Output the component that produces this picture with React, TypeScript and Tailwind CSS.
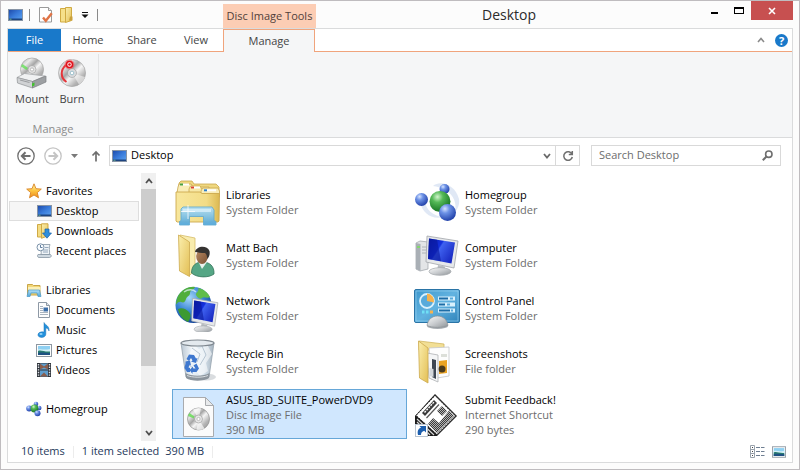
import { useState, type ReactNode } from "react";

type IconProps = { className?: string };

function Gradients() {
  return (
    <svg className="absolute h-0 w-0" aria-hidden="true">
      <defs>
        <linearGradient id="screen" x1="0" y1="0" x2="1" y2="1">
          <stop offset="0" stopColor="#1c48a8" />
          <stop offset="0.5" stopColor="#3a7cdb" />
          <stop offset="1" stopColor="#5fa4ee" />
        </linearGradient>
        <linearGradient id="deepScreen" x1="0" y1="0" x2="1" y2="0.6">
          <stop offset="0" stopColor="#0a1aa8" />
          <stop offset="0.45" stopColor="#1430dd" />
          <stop offset="0.5" stopColor="#3f62f0" />
          <stop offset="1" stopColor="#1a2cc4" />
        </linearGradient>
        <linearGradient id="folder" x1="0" y1="0" x2="1" y2="1">
          <stop offset="0" stopColor="#fbefae" />
          <stop offset="1" stopColor="#e3bf55" />
        </linearGradient>
        <linearGradient id="folderFront" x1="0" y1="0" x2="1" y2="0">
          <stop offset="0" stopColor="#f8e79d" />
          <stop offset="0.7" stopColor="#f3dc86" />
          <stop offset="1" stopColor="#dcb952" />
        </linearGradient>
        <linearGradient id="stand" x1="0" y1="0" x2="0" y2="1">
          <stop offset="0" stopColor="#b6e2f8" />
          <stop offset="1" stopColor="#4fa5d8" />
        </linearGradient>
        <linearGradient id="metal" x1="0" y1="0" x2="1" y2="1">
          <stop offset="0" stopColor="#fafafa" />
          <stop offset="0.5" stopColor="#c9cccf" />
          <stop offset="1" stopColor="#8f9498" />
        </linearGradient>
        <linearGradient id="disc" x1="0" y1="0" x2="1" y2="1">
          <stop offset="0" stopColor="#a9a9a9" />
          <stop offset="0.25" stopColor="#e9e9e9" />
          <stop offset="0.42" stopColor="#a6a6a6" />
          <stop offset="0.55" stopColor="#f6f6f6" />
          <stop offset="0.75" stopColor="#b5b5b5" />
          <stop offset="1" stopColor="#8c8c8c" />
        </linearGradient>
        <radialGradient id="blueBall" cx="0.35" cy="0.28" r="0.75">
          <stop offset="0" stopColor="#d5e3ff" />
          <stop offset="0.35" stopColor="#6d92e6" />
          <stop offset="1" stopColor="#1f3fa8" />
        </radialGradient>
        <radialGradient id="greenBall" cx="0.38" cy="0.28" r="0.75">
          <stop offset="0" stopColor="#d2f5cd" />
          <stop offset="0.35" stopColor="#55b957" />
          <stop offset="1" stopColor="#12701f" />
        </radialGradient>
        <radialGradient id="globe" cx="0.38" cy="0.3" r="0.75">
          <stop offset="0" stopColor="#a6d8fa" />
          <stop offset="0.5" stopColor="#3a86d4" />
          <stop offset="1" stopColor="#123f94" />
        </radialGradient>
        <linearGradient id="panel" x1="0" y1="0" x2="1" y2="1">
          <stop offset="0" stopColor="#3d97cd" />
          <stop offset="0.5" stopColor="#62b3e0" />
          <stop offset="1" stopColor="#2f83bb" />
        </linearGradient>
        <linearGradient id="glass" x1="0" y1="0" x2="1" y2="0">
          <stop offset="0" stopColor="#b9c6d2" />
          <stop offset="0.3" stopColor="#edf3f8" />
          <stop offset="0.7" stopColor="#d5e2ec" />
          <stop offset="1" stopColor="#a5b3bf" />
        </linearGradient>
        <linearGradient id="star" x1="0" y1="0" x2="0" y2="1">
          <stop offset="0" stopColor="#fff6b0" />
          <stop offset="0.5" stopColor="#fdc43f" />
          <stop offset="1" stopColor="#ee8a1d" />
        </linearGradient>
        <linearGradient id="skin" x1="0" y1="0" x2="1" y2="1">
          <stop offset="0" stopColor="#b98a63" />
          <stop offset="1" stopColor="#7a5234" />
        </linearGradient>
      </defs>
    </svg>
  );
}

/* ---------- small icons ---------- */

const DesktopIcon = ({ className = "h-3 w-[15px]" }: IconProps) => (
  <svg viewBox="0 0 15 12" className={className} aria-hidden="true">
    <rect x="0.5" y="0.5" width="14" height="11" fill="url(#screen)" stroke="#8794a5" />
    <path d="M1 9.500h13v1.500H1z" fill="#1d4480" />
    <path d="M1.500 10.200h2" stroke="#7fd08a" strokeWidth="0.8" />
  </svg>
);

const PropertiesIcon = () => (
  <svg viewBox="0 0 14 16" className="h-4 w-3.5" aria-hidden="true">
    <path d="M.5.5h9l3 3v11.5H.5z" fill="#fff" stroke="#9a9a9a" />
    <path d="M9.500 .5v3h3" fill="#eee" stroke="#9a9a9a" />
    <path d="M4 10.500l2.800 3.300 6-7.500" fill="none" stroke="#e07446" strokeWidth="2.400" />
  </svg>
);

const NewFolderIcon = () => (
  <svg viewBox="0 0 13 16" className="h-4 w-[13px]" aria-hidden="true">
    <path d="M.5 1.500h4.500l1 1v12.500H.5z" fill="#f6e08a" stroke="#d0aa42" />
    <path d="M5.500.5h6v13l-6 2z" fill="url(#folder)" stroke="#d0aa42" />
    <path d="M10 9.500h2.500v4H9z" fill="#c9a03b" />
  </svg>
);

const StarIcon = () => (
  <svg viewBox="0 0 16 16" className="h-4 w-4" aria-hidden="true">
    <path
      d="M8 .8l2 4.900 5.300.4-4 3.500 1.200 5.200L8 12l-4.500 2.800 1.200-5.200-4-3.500L6 5.700z"
      fill="url(#star)"
      stroke="#d98324"
      strokeWidth="0.9"
    />
  </svg>
);

const DownloadsIcon = () => (
  <svg viewBox="0 0 16 16" className="h-4 w-4" aria-hidden="true">
    <path d="M1.500 1.500h4v12.500h-4z" fill="#f4dc83" stroke="#cfa945" />
    <path d="M5.500.8h6.500v12l-6.500 2.500z" fill="url(#folder)" stroke="#cfa945" />
    <path d="M9 6h4v4h2.500L11 15.200 6.500 10H9z" fill="#2f8fdd" stroke="#1b62a8" strokeWidth="0.7" />
  </svg>
);

const RecentIcon = () => (
  <svg viewBox="0 0 16 16" className="h-4 w-4" aria-hidden="true">
    <path d="M4 1.500h10c-1.500 3 0 7-.5 10H5c1-3-1-6-1-10z" fill="#eef3f7" stroke="#8795a3" strokeWidth="0.8" />
    <path d="M2 11.500h12.500c1.500 1 .5 3-1 3H3c-1.500 0-2-2-1-3z" fill="#cfd9e1" stroke="#8795a3" strokeWidth="0.8" />
    <path d="M7 7h5M7 9h5M9 4.500h3.500" stroke="#7d94ad" strokeWidth="0.8" />
    <circle cx="4.500" cy="4.300" r="3.500" fill="#f9fcff" stroke="#7b92a8" />
    <path d="M4.500 2v2.500h2" fill="none" stroke="#3c5d85" strokeWidth="0.8" />
  </svg>
);

const LibrariesSmallIcon = () => (
  <svg viewBox="0 0 16 16" className="h-4 w-4" aria-hidden="true">
    <path d="M1.500 2.500h5l1 1h6.500V13h-12.500z" fill="#f2d778" stroke="#c9a548" />
    <path d="M2 5h12.500v3H2z" fill="#fbf0b8" />
    <path d="M2.500 8h11l1.500 6.500h-3L11 11H5l-1 3.500H1z" fill="url(#stand)" stroke="#4c9ac9" strokeWidth="0.7" />
  </svg>
);

const DocumentsIcon = () => (
  <svg viewBox="0 0 16 16" className="h-4 w-4" aria-hidden="true">
    <path d="M2.500.5h8l3 3v12h-11z" fill="#fdfdfd" stroke="#8e99a5" />
    <path d="M10.500.5v3h3" fill="#dde4ea" stroke="#8e99a5" />
    <path d="M4 4.500h3M4 6.500h3M4 8.500h3M4 10.500h8M4 12.500h8" stroke="#a9b4bf" />
    <path d="M7.500 5.500h4.500v4H7.500z" fill="#3c6ea8" />
  </svg>
);

const MusicIcon = () => (
  <svg viewBox="0 0 16 16" className="h-4 w-4" aria-hidden="true">
    <path
      d="M8 .5c1 2.500 5.800 3.500 5 8.500-.4-2-1.800-2.800-3.200-3v6.200c0 2-2 3.300-4.500 3.200C3 15.300 1.800 14 2 12.500c.3-2 3-3.200 6-2.400z"
      fill="#2391dc"
      stroke="#1a70b5"
      strokeWidth="0.5"
    />
    <ellipse cx="5" cy="12" rx="1.600" ry="1" fill="#8fd0f7" />
  </svg>
);

const PicturesIcon = ({ className = "h-[13px] w-4" }: IconProps) => (
  <svg viewBox="0 0 16 13" className={className} aria-hidden="true">
    <rect x="0.5" y="0.5" width="15" height="12" fill="#fcfcfc" stroke="#8d97a1" />
    <path d="M2 2h12v9H2z" fill="#8fd0f2" />
    <path d="M2 5.500c3-1 5 1 12-.5V8H2z" fill="#d2f0f5" />
    <path d="M2 7c3-1.500 6 1 12 .5V11H2z" fill="#287a70" />
    <path d="M2 9c4-1 7 0 12 0v2H2z" fill="#1e5182" />
  </svg>
);

const VideosIcon = () => (
  <svg viewBox="0 0 16 16" className="h-4 w-4" aria-hidden="true">
    <path d="M1 1h14v14H1z" fill="#30353c" />
    <path d="M4 1.500h8v6H4zM4 8.500h8v6H4z" fill="#5f9dcc" />
    <path d="M4 1.500l4 3 4-3v6L8 5.500 4 7.500zM4 14.500l4-4 4 4z" fill="#8a5d4b" />
    <path d="M2.500 2v12.500M13.500 2v12.500" stroke="#dfe3e8" strokeWidth="1.400" strokeDasharray="1.400 1.200" />
  </svg>
);

const HomegroupSmallIcon = () => (
  <svg viewBox="0 0 16 16" className="h-4 w-4" aria-hidden="true">
    <circle cx="10" cy="3" r="2.300" fill="url(#blueBall)" />
    <circle cx="3.200" cy="7.500" r="3" fill="url(#blueBall)" />
    <circle cx="13.200" cy="7" r="2.300" fill="url(#blueBall)" />
    <circle cx="8.500" cy="7.500" r="3.900" fill="url(#greenBall)" />
    <circle cx="11.500" cy="12.300" r="3" fill="url(#blueBall)" />
  </svg>
);

/* ---------- ribbon icons ---------- */

const MountIcon = () => (
  <svg viewBox="0 0 32 32" className="h-8 w-8" aria-hidden="true">
    <circle cx="16" cy="12.500" r="11.500" fill="url(#disc)" stroke="#a3a3a3" strokeWidth="0.7" />
    <path d="M5 9.500a11.500 11.500 0 0 1 1.500-2.500l5.500 4-1.500 2z" fill="#5de04f" opacity="0.75" />
    <circle cx="16" cy="12.500" r="4" fill="#e2e2e2" stroke="#9b9b9b" strokeWidth="0.6" />
    <circle cx="16" cy="12.500" r="1.600" fill="#fff" stroke="#9b9b9b" strokeWidth="0.6" />
    <path d="M8.500 16.500L29 19l-12.500 5.500L1 20.500z" fill="#f0f1f2" stroke="#9ea1a4" strokeWidth="0.7" />
    <path d="M1 20.500l15.500 4V31L1.500 26z" fill="#d0d2d4" stroke="#8f9295" strokeWidth="0.7" />
    <path d="M16.500 24.500L30 19v6L16.500 31z" fill="#9da0a3" stroke="#7d8083" strokeWidth="0.7" />
    <path d="M4 23l9.500 2.500" stroke="#8b8e91" strokeWidth="0.8" />
    <path d="M16 26.500l2.500-1v3l-2.500 1z" fill="#42c22e" />
  </svg>
);

const BurnIcon = () => (
  <svg viewBox="0 0 32 32" className="h-8 w-8" aria-hidden="true">
    <circle cx="16" cy="16" r="13.500" fill="url(#disc)" stroke="#a3a3a3" strokeWidth="0.7" />
    <path d="M16 16L8 5a13.500 13.500 0 0 1 9-2.500zM16 16l13 4a13.500 13.500 0 0 1-6 7.500z" fill="#fff" opacity="0.5" />
    <circle cx="16" cy="16" r="4.500" fill="#d8dadc" stroke="#9b9b9b" strokeWidth="0.6" />
    <circle cx="16" cy="16" r="1.800" fill="#fff" stroke="#8db9c6" strokeWidth="0.8" />
    <path d="M10 8C4 13 4.500 21 10.500 25" fill="none" stroke="#e5363b" strokeWidth="2" />
    <circle cx="13.500" cy="7.500" r="5" fill="#ee4a50" opacity="0.55" />
    <circle cx="13.500" cy="7.500" r="3" fill="#fff" stroke="#e0121b" strokeWidth="1.600" />
    <circle cx="13.500" cy="7.500" r="1.300" fill="#e0121b" />
  </svg>
);

/* ---------- file icons ---------- */

const Large = ({ children }: { children: ReactNode }) => (
  <svg viewBox="0 0 48 48" className="h-12 w-12 shrink-0" aria-hidden="true">
    {children}
  </svg>
);

const LibrariesIcon = () => (
  <Large>
    <path d="M5 11V5l2-2h11l2 3h22l3 3v8H5z" fill="#efd77f" stroke="#c9a64b" strokeWidth="0.8" />
    <path d="M4 9l1-3h12l2 3h16v6H3z" fill="#f9edb7" stroke="#c9a64b" strokeWidth="0.8" />
    <path d="M15 11l1.500-3H26l2 3h13v6H15z" fill="#f7e8a6" stroke="#c9a64b" strokeWidth="0.8" />
    <path d="M27 13l1.500-3H44l1.500 3v6H27z" fill="#f9edb7" stroke="#c9a64b" strokeWidth="0.8" />
    <path d="M6 5.500h9v2H6z" fill="#fff" />
    <path d="M6 5.500h3v2H6z" fill="#4aa23f" />
    <path d="M17 8.500h9v2h-9z" fill="#fff" />
    <path d="M17 8.500h3v2h-3z" fill="#d9442f" />
    <path d="M30 11.300h12v2H30z" fill="#fff" />
    <path d="M30 11.300h3v2h-3z" fill="#2e7fc6" />
    <path d="M2 14h24l2 1.500h17.500L45 43l-1 1H3l-1-1z" fill="url(#folderFront)" stroke="#cda94e" strokeWidth="0.9" />
    <path
      d="M9 29h29l2 3v10.500l2 1v3.500H29.500v-8.500h-14V47H5.500v-3.500l1.500-1V31z"
      fill="url(#stand)"
      stroke="#5fa9d3"
      strokeWidth="0.9"
      opacity="0.94"
    />
    <path d="M9 31h28v3H8z" fill="#e1f4fd" opacity="0.7" />
    <path d="M14 27v14M7 33.500h14" stroke="#fff" strokeWidth="1" opacity="0.75" />
  </Large>
);

const UserIcon = () => (
  <Large>
    <path d="M6 4l15 3v32l-6 6z" fill="#f8ecae" stroke="#d7bd67" strokeWidth="0.8" />
    <path d="M4.500 4l11 7v34.500l-10-5.500z" fill="url(#folder)" stroke="#cda94e" strokeWidth="0.8" />
    <path d="M17.500 42c0-8 5-11 11-11 7 0 12 4 11.500 12-5 4-17 4-22.500-1z" fill="#55a685" stroke="#34745a" strokeWidth="0.8" />
    <path d="M24.500 31l3.500 7 5-7z" fill="#e9f3ee" />
    <ellipse cx="28" cy="25.500" rx="5.800" ry="7.500" fill="url(#skin)" />
    <path d="M21 21c1-6 12-7.500 14.500-1 .8 4-1 7-2.500 8 .5-3-1-5.500-2-6-4 0-7-.5-10-1z" fill="#353331" />
  </Large>
);

const Monitor = () => (
  <>
    <path d="M14 5l31 5-4 27-28-6z" fill="#e6e8ea" stroke="#a2a6ab" strokeWidth="0.8" />
    <path d="M16 7.500l26 4-3.500 21L15 28z" fill="url(#deepScreen)" />
    <path d="M16 7.500l8 1.200 4 21.500L15 28z" fill="#091899" opacity="0.6" />
    <path d="M25 34l7 1.500V40h-8z" fill="#b9bdc1" />
    <ellipse cx="27" cy="40.500" rx="11" ry="3.800" fill="url(#metal)" stroke="#a2a6ab" strokeWidth="0.7" />
  </>
);

const NetworkIcon = () => (
  <Large>
    <circle cx="19.500" cy="21" r="18" fill="url(#globe)" />
    <path d="M4 12c4-7 12-10 17-9-1 3-5 3-5 6s-3 3-4 6-2 4-5 3-5 3-5 3c0-3 .5-6 2-9z" fill="#50ae3c" />
    <path d="M24 4c6 1 10 5 12 9-3 2-6-1-8 1s-5-1-6-3 4-4 2-7z" fill="#5fbd4a" />
    <path d="M4 25c4-2 8 0 11 3s1 7-1 10c-6-3-9-8-10-13z" fill="#3c9a31" />
    <path d="M10 8c4-3 9-3 12 0" stroke="#e6f6ff" strokeWidth="1.500" fill="none" opacity="0.7" />
    <g transform="translate(7 10) scale(.82 .87)">
      <Monitor />
    </g>
  </Large>
);

const ComputerIcon = () => (
  <Large>
    <path d="M3 12l4-2 8 1v27l-8 2-4-2z" fill="#e3e5e7" stroke="#a4a9ae" strokeWidth="0.8" />
    <path d="M3 12l4.500 1V40L3 38z" fill="#a9afb5" />
    <path d="M4 16h3" stroke="#7ce060" strokeWidth="1.600" />
    <path d="M9 16h5M9 19h5M9 22h5" stroke="#a3a8ad" strokeWidth="0.8" />
    <Monitor />
  </Large>
);

const HomegroupIcon = () => (
  <Large>
    <path d="M7 24c2 11 12 18 23 15-10-1-17-7-18-16z" fill="#d8e2f2" opacity="0.8" />
    <path d="M20 8c7-6 22-2 26 13 1 6-2 11-4 13 3-12-5-24-22-26z" fill="#d8e2f2" opacity="0.8" />
    <circle cx="31.500" cy="11" r="5" fill="url(#blueBall)" />
    <circle cx="8.500" cy="21.500" r="6.500" fill="url(#blueBall)" />
    <circle cx="27" cy="23.500" r="10.500" fill="url(#greenBall)" />
    <circle cx="34.500" cy="34.500" r="8.500" fill="url(#blueBall)" />
  </Large>
);

const ControlPanelIcon = () => (
  <Large>
    <rect x="1.500" y="5.500" width="45" height="33" rx="1.500" fill="url(#panel)" stroke="#2a74a6" />
    <rect x="3" y="7" width="42" height="30" fill="none" stroke="#a5d8f3" strokeWidth="0.8" opacity="0.7" />
    <circle cx="14" cy="17" r="7" fill="#58aadb" stroke="#d9f1fd" strokeWidth="1.800" />
    <path d="M14 17V9.500a7.500 7.500 0 0 1 7 9z" fill="#f6b24d" />
    <path d="M25 12.500h17v4H25zM25 18.500h17v4H25zM25 24.500h17v4H25z" fill="#d9f1fd" />
    <path d="M26 14.500h9M26 20.500h6M26 26.500h11" stroke="#1c6da7" strokeWidth="2" />
    <path d="M37 14.500h3M34 20.500h3M38 26.500h2" stroke="#58aadb" strokeWidth="2" />
    <path d="M9 26.500h2.500v3H9zM13 26.500h2.500v3H13z" fill="#6fe0f5" />
    <path d="M17 26.500h3v3h-3z" fill="#f6b24d" />
    <ellipse cx="24.500" cy="42" rx="10.500" ry="3" fill="#a8adb2" />
    <path d="M14 41.500c1-6 5-9.500 10.500-9.500S34 35.500 35 41.500c-5 2.500-16 2.500-21 0z" fill="url(#metal)" stroke="#8b9095" strokeWidth="0.7" />
  </Large>
);

const RecycleBinIcon = () => (
  <Large>
    <ellipse cx="32" cy="40" rx="10" ry="3.500" fill="#c9cdd1" opacity="0.7" />
    <path d="M7 6h33l-5 34c-5 3.500-18 3.500-23 0z" fill="url(#glass)" stroke="#97a3ae" strokeWidth="0.8" />
    <path d="M10 8l8 3-3 7 8 5-4 8 7 8 8-5-2-8 6-9-5-10-8 5-6-5z" fill="#fff" opacity="0.55" />
    <path d="M18 11l8 6-3 8M28 9l4 9-6 10M15 28l8 6" fill="none" stroke="#a9bac9" strokeWidth="1" opacity="0.8" />
    <path d="M11.500 36c6 3.500 18 3.500 24 0l-.5 5c-5 3.500-18 3.500-23 0z" fill="#8b949c" />
    <path d="M13 38.500c5 2 15 2.500 21 0" fill="none" stroke="#d7dce0" />
    <ellipse cx="23.500" cy="6" rx="16.500" ry="3" fill="#e3e9ee" stroke="#7f8890" strokeWidth="1.200" />
    <g fill="#3f78cf">
      <path d="M12.500 22l2.500-4.500 5 .5 2 3.500 1.500-.5-1.500 5-5-1.500 1.500-1-1.500-2.500-2 3z" />
      <path d="M22.500 26.500l2.500 5-2.500 3.500h-4v2l-3-4 3.500-3.500v2h2.500l-2-3z" />
      <path d="M11.500 24.500l4.500-1 1 5-1.500-.7-1 2.700 1.500.5V35h-3L10.500 31l1-4.500z" />
    </g>
  </Large>
);

const ScreenshotsIcon = () => (
  <Large>
    <path d="M6 4l25 3v6H6z" fill="#f2df95" stroke="#d2b65f" strokeWidth="0.8" />
    <path d="M16 11l20-1v29l-18 3z" fill="#fdfdfd" stroke="#c4c7ca" strokeWidth="0.8" />
    <path d="M26 24l8-1v13l-8 1z" fill="#e9a324" />
    <circle cx="29" cy="32" r="3.500" fill="#4a3a1d" />
    <path d="M28 17h6v3h-6z" fill="#dcdfd9" />
    <path d="M14 16l11 2v27l-9-4z" fill="#f4f5f6" stroke="#aeb1b4" strokeWidth="0.8" />
    <path d="M19 22l4 1v19l-4-2z" fill="#3e4753" />
    <path d="M16.500 31l4 1v8l-4-1z" fill="#d3d7db" />
    <path d="M5.500 4l9.500 7v35l-8.500-5z" fill="url(#folder)" stroke="#cda94e" strokeWidth="0.8" />
  </Large>
);

const DiscImageIcon = () => (
  <Large>
    <path d="M9.500 7.500h22l8 8v31h-30z" fill="#fbfbfb" stroke="#a9abae" />
    <path d="M31.500 7.500v8h8z" fill="#e8eaec" stroke="#a9abae" />
    <circle cx="24.500" cy="29" r="11" fill="url(#disc)" stroke="#8f8f8f" strokeWidth="0.7" />
    <path d="M24.500 29L19 19.500a11 11 0 0 1 8-1.200zM24.500 29l6 9.500a11 11 0 0 1-8 1.200z" fill="#fff" opacity="0.65" />
    <path d="M14 26a11 11 0 0 1 1.500-3l5 3.500-.5 2z" fill="#61dc4f" opacity="0.8" />
    <circle cx="24.500" cy="29" r="4" fill="#e8e8e8" stroke="#a0a0a0" strokeWidth="0.7" />
    <circle cx="24.500" cy="29" r="1.600" fill="#fff" stroke="#a0a0a0" strokeWidth="0.6" />
  </Large>
);

const FeedbackIcon = () => (
  <Large>
    <defs>
      <pattern id="dither" width="2" height="2" patternUnits="userSpaceOnUse">
        <rect width="2" height="2" fill="#b4b4b4" />
        <path d="M0 0h1v1H0zM1 1h1v1H1z" fill="#3a3a3a" />
      </pattern>
    </defs>
    <path d="M2 26L22 4l22 22-20 20H15L2 34z" fill="#1b1b1b" />
    <path d="M3 25.500L22 5.500 42.500 26 24 44.500z" fill="#fff" stroke="#1b1b1b" strokeDasharray="2 1" />
    <path d="M4 29l17 16M4 32l13 13" stroke="#d5d5d5" strokeWidth="1.200" />
    <path d="M9 23L21 10l3 3-12 13z" fill="#3b3b3b" />
    <path d="M11.500 22.500L21 12" stroke="#fff" strokeWidth="1.400" strokeDasharray="2 1" />
    <path d="M13.500 28L26 14.500" stroke="#555" strokeWidth="1.200" />
    <path d="M29 16l5 5-5 5-5-5z" fill="url(#dither)" />
    <path d="M36 20.500l5 5.500-17 17-9-9 5-6 6 5z" fill="url(#dither)" />
    <rect x="2.500" y="34.500" width="12" height="12" fill="#fff" stroke="#b9c4d0" />
    <path d="M5 45c-1-4 .5-6.500 3-7.200L6.500 36H13v6.500l-1.800-1.700C9 41.500 8 43 8 45z" fill="#1d5fae" />
  </Large>
);

/* ---------- glyph icons ---------- */

const Glyph = ({ d, box = 12, width = 2, className }: { d: string; box?: number; width?: number; className: string }) => (
  <svg viewBox={`0 0 ${box} ${box}`} className={className} fill="none" stroke="currentColor" strokeWidth={width} aria-hidden="true">
    <path d={d} />
  </svg>
);

const CircleArrow = ({ forward = false }: { forward?: boolean }) => (
  <svg viewBox="0 0 18 18" className="h-[18px] w-[18px]" fill="none" stroke="currentColor" aria-hidden="true">
    <circle cx="9" cy="9" r="8.200" strokeWidth="1.300" />
    <path d={forward ? "M4.500 9h8.500M9.500 5.200L13.200 9l-3.700 3.800" : "M13.500 9H5M8.500 5.200L4.800 9l3.700 3.800"} strokeWidth="2" />
  </svg>
);

/* ---------- data ---------- */

const favorites = [
  { name: "Desktop", icon: <DesktopIcon /> },
  { name: "Downloads", icon: <DownloadsIcon /> },
  { name: "Recent places", icon: <RecentIcon /> },
];

const libraries = [
  { name: "Documents", icon: <DocumentsIcon /> },
  { name: "Music", icon: <MusicIcon /> },
  { name: "Pictures", icon: <PicturesIcon /> },
  { name: "Videos", icon: <VideosIcon /> },
];

const files = [
  { name: "Libraries", kind: "System Folder", icon: <LibrariesIcon /> },
  { name: "Homegroup", kind: "System Folder", icon: <HomegroupIcon /> },
  { name: "Matt Bach", kind: "System Folder", icon: <UserIcon /> },
  { name: "Computer", kind: "System Folder", icon: <ComputerIcon /> },
  { name: "Network", kind: "System Folder", icon: <NetworkIcon /> },
  { name: "Control Panel", kind: "System Folder", icon: <ControlPanelIcon /> },
  { name: "Recycle Bin", kind: "System Folder", icon: <RecycleBinIcon /> },
  { name: "Screenshots", kind: "File folder", icon: <ScreenshotsIcon /> },
  { name: "ASUS_BD_SUITE_PowerDVD9", kind: "Disc Image File", size: "390 MB", icon: <DiscImageIcon /> },
  { name: "Submit Feedback!", kind: "Internet Shortcut", size: "290 bytes", icon: <FeedbackIcon /> },
];

/* ---------- window parts ---------- */

function TitleBar() {
  return (
    <header className="flex h-[27px] items-start">
      <div className="flex h-full w-[216px] shrink-0 items-center">
        <DesktopIcon className="ml-px h-3 w-[15px]" />
        <span className="ml-1.5 h-3 w-px bg-[#8a8a8a]" />
        <button aria-label="Properties" className="ml-[9px]">
          <PropertiesIcon />
        </button>
        <button aria-label="New folder" className="ml-[7px]">
          <NewFolderIcon />
        </button>
        <button aria-label="Customize Quick Access Toolbar" className="ml-2">
          <svg viewBox="0 0 8 8" className="h-2 w-2" aria-hidden="true">
            <path d="M1 1h6v1H1zM.5 3.500h7L4 7z" fill="#111" />
          </svg>
        </button>
        <span className="ml-2 h-3 w-px bg-[#8a8a8a]" />
      </div>
      <div className="mt-[3px] flex h-6 w-[93px] shrink-0 items-center justify-center bg-[#fccdb4] text-[#51413a]">
        Disc Image Tools
      </div>
      <h1 className="flex-1 text-center text-sm leading-7 text-[#2b2b2b]">Desktop</h1>
      <div className="flex h-[19px] text-black">
        <button aria-label="Minimize" className="flex w-6 items-center justify-center pt-1">
          <span className="h-0.5 w-[7px] bg-black" />
        </button>
        <button aria-label="Maximize" className="flex w-[25px] items-center justify-center">
          <span className="h-[7px] w-2.5 border border-t-2 border-black" />
        </button>
        <button aria-label="Close" className="flex w-[42px] items-center justify-center bg-[#c75050] text-white">
          <Glyph d="M1 1l6 6M7 1L1 7" box={8} width={1.6} className="h-2 w-2" />
        </button>
      </div>
    </header>
  );
}

function RibbonTabs() {
  return (
    <nav className="flex h-[23px] bg-white text-[#444]" aria-label="Ribbon tabs">
      <button className="w-[53px] border-b border-[#f0a47c] bg-[#1979ca] text-white">File</button>
      {["Home", "Share", "View"].map((t) => (
        <button key={t} className="w-[54px] border-b border-[#f0a47c]">
          {t}
        </button>
      ))}
      <button className="w-[92px] border-x border-t border-[#f0a47c] bg-[#f5f6f7]">Manage</button>
      <div className="flex flex-1 items-center justify-end border-b border-[#f0a47c] pr-1">
        <button aria-label="Collapse the ribbon" className="mr-2.5 text-[#8a8a8a]">
          <Glyph d="M1 6l3-3.500L7 6" box={8} width={1.6} className="h-2 w-2" />
        </button>
        <button
          aria-label="Help"
          className="flex h-[13px] w-[13px] items-center justify-center rounded-full bg-[#1979ca] text-[11px] leading-none font-bold text-white"
        >
          ?
        </button>
      </div>
    </nav>
  );
}

function Ribbon() {
  return (
    <section className="flex border-b border-[#dadbdc] bg-[#f5f6f7] pt-0.5 pb-px text-[#444]" aria-label="Manage">
      <div className="flex w-[91px] flex-col border-r border-[#e2e3e4] pt-[3px]">
        <div className="flex pl-1">
          <button className="flex w-10 flex-col items-center">
            <MountIcon />
            <span className="mt-0.5 leading-[15px]">Mount</span>
          </button>
          <button className="flex w-10 flex-col items-center">
            <BurnIcon />
            <span className="mt-0.5 leading-[15px]">Burn</span>
          </button>
        </div>
        <span className="mt-[15px] text-center leading-[15px] text-[#8c8c8c]">Manage</span>
      </div>
    </section>
  );
}

function AddressRow() {
  return (
    <div className="flex h-[35px] items-center bg-white pr-[11px] pl-[9px]">
      <button aria-label="Back" className="text-[#6f6f6f]">
        <CircleArrow />
      </button>
      <button aria-label="Forward" className="ml-[9px] text-[#c4c4c4]">
        <CircleArrow forward />
      </button>
      <button aria-label="Recent locations" className="ml-[9px]">
        <svg viewBox="0 0 7 4" className="h-1 w-[7px]" aria-hidden="true">
          <path d="M0 0h7L3.500 4z" fill="#7a7a7a" />
        </svg>
      </button>
      <button aria-label="Up" className="ml-3 text-[#6f6f6f]">
        <Glyph d="M6 11.500V2M2.500 5.500L6 2l3.500 3.500" width={1.7} className="h-3 w-3" />
      </button>
      <div className="ml-[7px] flex h-[21px] min-w-0 flex-1 items-center border border-[#d9d9d9]">
        <DesktopIcon className="ml-0.5 h-3 w-[15px] shrink-0" />
        <input aria-label="Address" defaultValue="Desktop" className="ml-1 min-w-0 flex-1 text-black outline-none" />
        <button aria-label="Previous locations" className="flex w-[17px] items-center justify-center text-[#6a6a6a]">
          <Glyph d="M1 2l3 3.500L7 2" box={8} width={1.8} className="h-2 w-2" />
        </button>
        <button aria-label="Refresh" className="flex h-full w-6 items-center justify-center border-l border-[#d9d9d9] text-[#6f6f6f]">
          <Glyph d="M10 4.200A4.300 4.300 0 1 0 10.300 7M10.300 1v3.500H6.800" width={1.5} className="h-3 w-3" />
        </button>
      </div>
      <div className="ml-[11px] flex h-[21px] w-[190px] items-center border border-[#d9d9d9]">
        <input aria-label="Search Desktop" placeholder="Search Desktop" className="min-w-0 flex-1 pl-[7px] outline-none placeholder:text-[#6d6d6d]" />
        <button aria-label="Search" className="mr-[7px] text-[#6f6f6f]">
          <svg viewBox="0 0 11 11" className="h-[11px] w-[11px]" fill="none" stroke="currentColor" aria-hidden="true">
            <circle cx="6.800" cy="4.200" r="3.200" strokeWidth="1.600" />
            <path d="M4.500 6.500L.8 10.200" strokeWidth="2" />
          </svg>
        </button>
      </div>
    </div>
  );
}

function NavGroup({ name, icon, items = [], place, onPick }: {
  name: string;
  icon: ReactNode;
  items?: { name: string; icon: ReactNode }[];
  place: string;
  onPick: (name: string) => void;
}) {
  return (
    <section>
      <button className="flex h-5 w-full items-center gap-1 pl-[17px]">
        {icon}
        {name}
      </button>
      {items.map((i) => (
        <button
          key={i.name}
          onClick={() => onPick(i.name)}
          className={`flex h-5 w-full items-center gap-1 border pl-[26px] ${
            i.name === place ? "border-[#dedede] bg-[#f6f6f6]" : "border-transparent"
          }`}
        >
          <span className="flex w-4 justify-center">{i.icon}</span>
          {i.name}
        </button>
      ))}
    </section>
  );
}

function Sidebar() {
  const [place, setPlace] = useState("Desktop");
  return (
    <aside className="flex w-[148px] shrink-0 text-black">
      <nav className="flex flex-1 flex-col gap-[19px] pt-2 pr-0.5 pl-px" aria-label="Places">
        <NavGroup name="Favorites" icon={<StarIcon />} items={favorites} place={place} onPick={setPlace} />
        <NavGroup name="Libraries" icon={<LibrariesSmallIcon />} items={libraries} place={place} onPick={setPlace} />
        <NavGroup name="Homegroup" icon={<HomegroupSmallIcon />} place={place} onPick={setPlace} />
      </nav>
      <div className="flex w-[15px] flex-col bg-[#f0f0f0] text-[#505050]">
        <button aria-label="Scroll up" className="flex h-4 items-center justify-center">
          <Glyph d="M1 6l3-3.500L7 6" box={8} width={1.8} className="h-2 w-2" />
        </button>
        <div className="flex-1">
          <div className="h-3/4 bg-[#cdcdcd]" />
        </div>
        <button aria-label="Scroll down" className="flex h-4 items-center justify-center">
          <Glyph d="M1 2l3 3.500L7 2" box={8} width={1.8} className="h-2 w-2" />
        </button>
      </div>
    </aside>
  );
}

function FileList() {
  const [selected, setSelected] = useState("ASUS_BD_SUITE_PowerDVD9");
  return (
    <main className="grid flex-1 grid-cols-[repeat(auto-fill,235px)] content-start gap-x-1 gap-y-[3px] pt-1 pl-4">
      {files.map((f) => (
        <button
          key={f.name}
          onClick={() => setSelected(f.name)}
          className={`flex h-[50px] items-center gap-1 border pl-px text-left leading-[15px] ${
            f.name === selected ? "border-[#66a7d8] bg-[#d0e7fe]" : "border-transparent"
          }`}
        >
          {f.icon}
          <span className="flex flex-col text-[#6d6d6d]">
            <span className="text-black">{f.name}</span>
            <span>{f.kind}</span>
            {f.size && <span>{f.size}</span>}
          </span>
        </button>
      ))}
    </main>
  );
}

function StatusBar() {
  return (
    <footer className="flex h-[21px] items-center pr-1.5 pl-[13px] text-[#1e395b]">
      <span>10 items</span>
      <span className="mx-2 h-3 w-px bg-[#ececec]" />
      <span>1 item selected</span>
      <span className="ml-1.5">390 MB</span>
      <span className="ml-2 h-3 w-px bg-[#ececec]" />
      <div className="ml-auto flex items-center gap-[7px]">
        <button aria-label="Details view">
          <svg viewBox="0 0 15 13" className="h-[13px] w-[15px]" fill="none" aria-hidden="true">
            <path d="M.5.500h4v12h-4zM.5 4.500h4M.5 8.500h4" stroke="#9aa3ad" />
            <path d="M2 2.500h1M2 6.500h1M2 10.500h1" stroke="#444" />
            <path d="M6 2.500h4M11 2.500h3.500M6 6.500h4M11 6.500h3.500M6 10.500h4M11 10.500h3.500" stroke="#6f7f92" />
          </svg>
        </button>
        <button aria-label="Large icons view">
          <PicturesIcon className="h-3 w-3.5" />
        </button>
      </div>
    </footer>
  );
}

export default function App() {
  return (
    <div className="flex min-h-screen flex-col border border-[#bfbcbf] bg-[#fcfcfc] px-1.5 pb-1.5 font-['Open_Sans','Noto_Sans',sans-serif] text-[11px]">
      <Gradients />
      <TitleBar />
      <div className="flex flex-1 flex-col border border-[#dadbdc] bg-white">
        <RibbonTabs />
        <Ribbon />
        <AddressRow />
        <div className="flex flex-1">
          <Sidebar />
          <FileList />
        </div>
        <StatusBar />
      </div>
    </div>
  );
}
